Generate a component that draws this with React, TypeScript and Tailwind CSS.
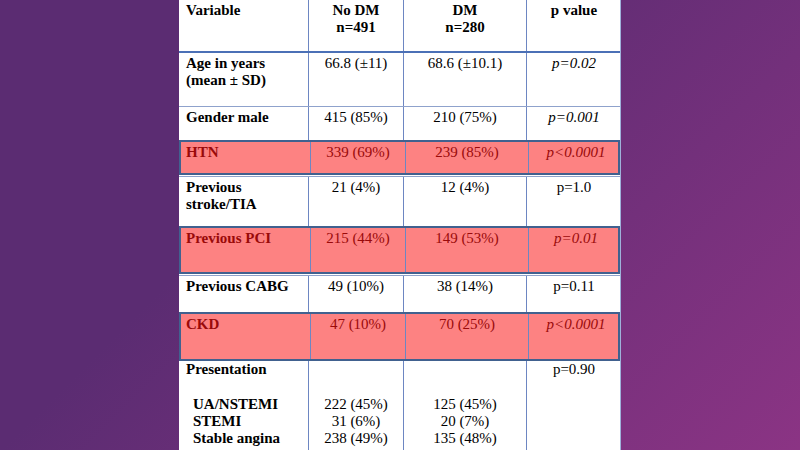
import React from 'react';

type Row = {
  label: React.ReactNode;
  a: React.ReactNode;
  b: React.ReactNode;
  p: string;
  italic?: boolean;
  hot?: boolean;
  h: string;
};

const cols = 'grid grid-cols-[129px_95px_123px_95px]';

const rows: Row[] = [
  { label: <>Age in years<br />(mean ± SD)</>, a: '66.8 (±11)', b: '68.6 (±10.1)', p: 'p=0.02', italic: true, h: 'h-[54px] border-b border-[#8fa2cc]' },
  { label: 'Gender male', a: '415 (85%)', b: '210 (75%)', p: 'p=0.001', italic: true, h: 'h-[33px]' },
  { label: 'HTN', a: '339 (69%)', b: '239 (85%)', p: 'p<0.0001', italic: true, hot: true, h: 'h-[35px]' },
  { label: <>Previous<br />stroke/TIA</>, a: '21 (4%)', b: '12 (4%)', p: 'p=1.0', h: 'h-[50px] border-t border-[#8fa2cc] mt-px' },
  { label: 'Previous PCI', a: '215 (44%)', b: '149 (53%)', p: 'p=0.01', italic: true, hot: true, h: 'h-[48px]' },
  { label: 'Previous CABG', a: '49 (10%)', b: '38 (14%)', p: 'p=0.11', h: 'h-[37px] border-t border-[#8fa2cc] mt-px' },
  { label: 'CKD', a: '47 (10%)', b: '70 (25%)', p: 'p<0.0001', italic: true, hot: true, h: 'h-[49px]' },
];

export default function App() {
  return (
    <div className="w-[800px] h-[450px] overflow-hidden flex justify-center bg-[linear-gradient(135deg,#5b2c72_36%,#8b3484_100%)] font-['Liberation_Serif','Times_New_Roman',serif] text-[15px] leading-[17px] text-black">
      <div className="w-[442px] h-[450px] bg-white flex flex-col border-r border-[#9fb2da]">
        {/* header */}
        <div className={`${cols} h-[53px] border-b-2 border-[#4b70b6] font-bold`}>
          <div className="pl-[7px] pt-[2px]">Variable</div>
          <div className="border-l border-[#6d86c2] text-center pt-[2px]">No DM<br />n=491</div>
          <div className="border-l border-[#6d86c2] text-center pt-[2px]">DM<br />n=280</div>
          <div className="border-l border-[#6d86c2] text-center pt-[2px]">p value</div>
        </div>

        {rows.map((r, i) => (
          <div
            key={i}
            className={`${cols} ${r.h} ${r.hot ? 'bg-[#fd8282] border-2 border-[#41618f] text-[#9a0a0a]' : ''}`}
          >
            <div className={`font-bold pt-[2px] ${r.hot ? 'pl-[5px]' : 'pl-[7px]'}`}>{r.label}</div>
            <div className="border-l border-[#6d86c2] text-center pt-[2px]">{r.a}</div>
            <div className="border-l border-[#6d86c2] text-center pt-[2px]">{r.b}</div>
            <div className={`border-l border-[#6d86c2] text-center pt-[2px] ${r.italic ? 'italic' : ''}`}>{r.p}</div>
          </div>
        ))}

        {/* presentation */}
        <div className={`${cols} flex-1`}>
          <div className="font-bold">
            <div className="pl-[7px]">Presentation</div>
            <div className="pl-[14px] mt-[18px]">
              UA/NSTEMI<br />STEMI<br />Stable angina
            </div>
          </div>
          <div className="border-l border-[#6d86c2] text-center">
            <div className="mt-[35px]">222 (45%)<br />31 (6%)<br />238 (49%)</div>
          </div>
          <div className="border-l border-[#6d86c2] text-center">
            <div className="mt-[35px]">125 (45%)<br />20 (7%)<br />135 (48%)</div>
          </div>
          <div className="border-l border-[#6d86c2] text-center">p=0.90</div>
        </div>
      </div>
    </div>
  );
}
